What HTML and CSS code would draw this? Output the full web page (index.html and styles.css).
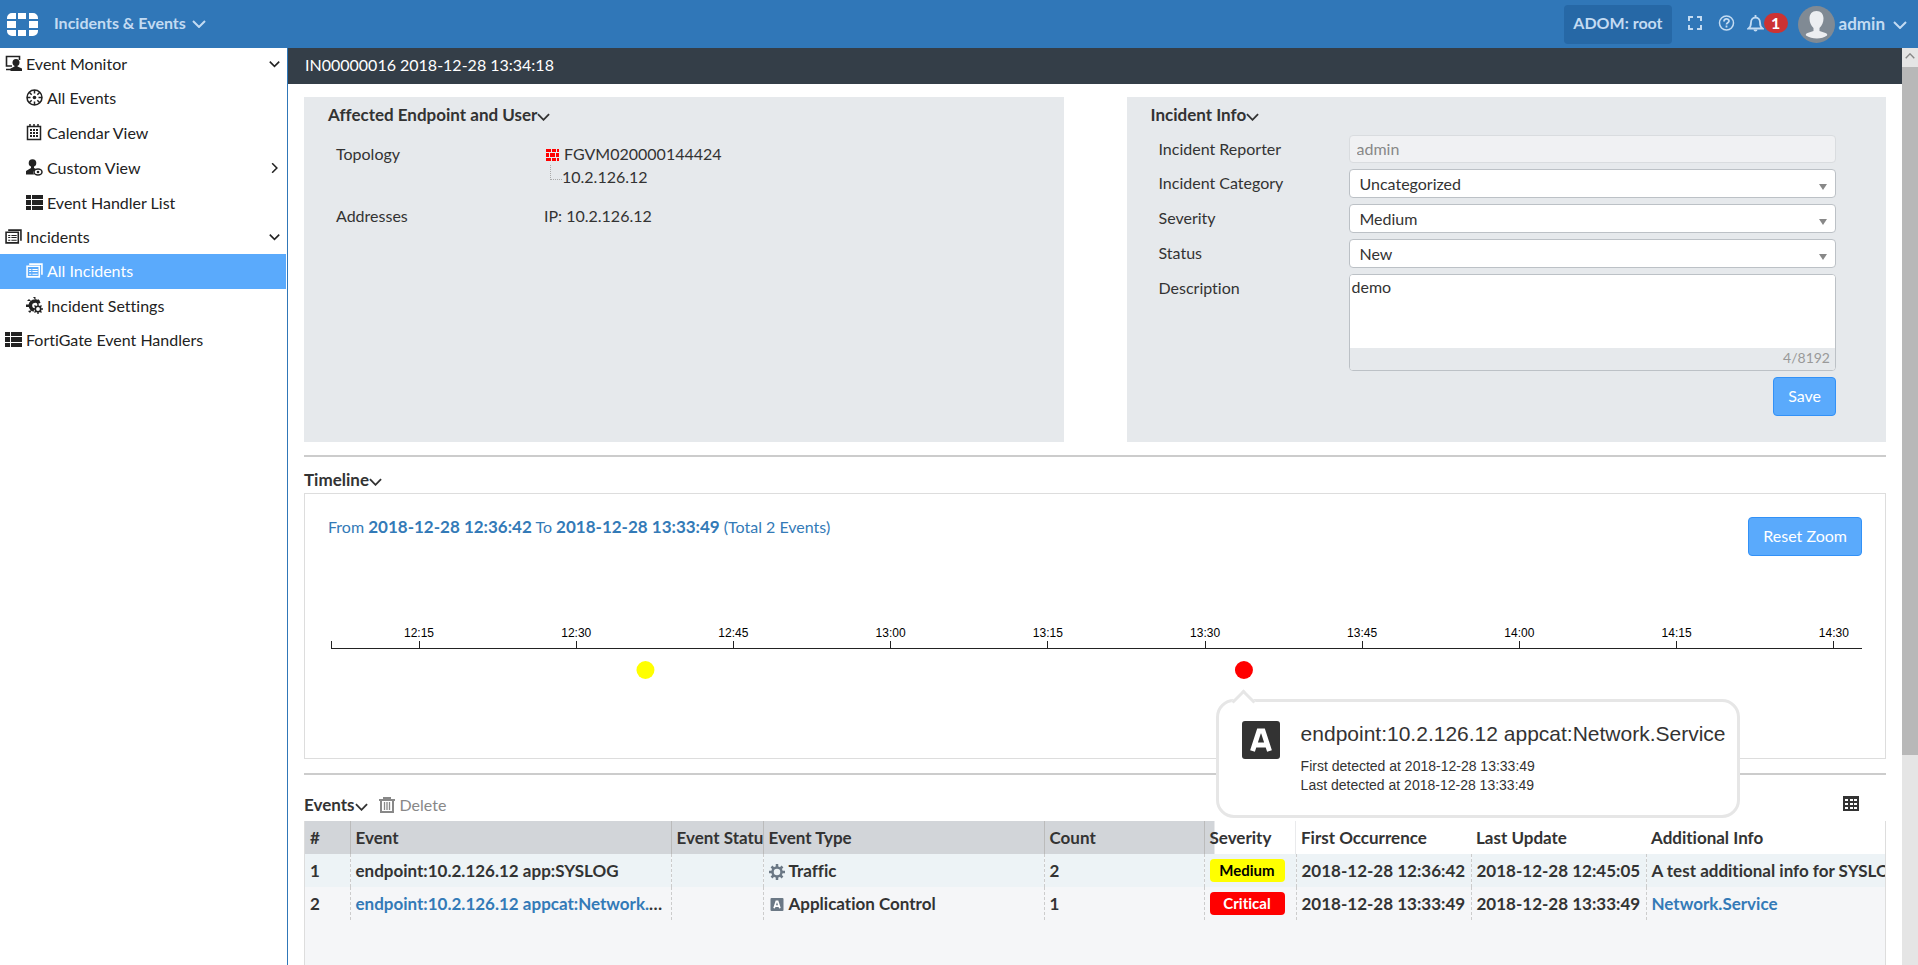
FILE: index.html
```html
<!DOCTYPE html>
<html lang="en">
<head>
    <meta charset="UTF-8">
    <title>Incidents &amp; Events</title>

    <link rel="stylesheet" href="styles.css">
</head>
<body>
<svg class="defs" width="0" height="0">
    <symbol id="chevron" viewBox="0 0 14 8"><path d="M1 1l6 6 6-6" fill="none" stroke="currentColor" stroke-width="2"/></symbol>
    <symbol id="list" viewBox="0 0 17 15"><path d="M0 0h5v4H0zM6 0h11v4H6zM0 5h5v5H0zM6 5h11v5H6zM0 11h5v4H0zM6 11h11v4H6z" fill="currentColor"/></symbol>
    <symbol id="cards" viewBox="0 0 16 14">
        <path d="M3 1h12v10M1 3h11.500v10H1z" fill="none" stroke="currentColor" stroke-width="1.500"/>
        <path d="M3 6h2M6 6h5M3 8h2M6 8h5M3 10.500h2M6 10.500h5" stroke="currentColor"/>
    </symbol>
    <symbol id="app" viewBox="0 0 38 38">
        <rect width="38" height="38" rx="3" fill="currentColor"/>
        <path d="M10.500 30L17 10h4l6.500 20M14 24h10" fill="none" stroke="#fff" stroke-width="5"/>
    </symbol>
</svg>

<header class="topbar">
    <svg class="logo" viewBox="0 0 31 23" fill="#fff">
        <path d="M5 0h4v6H0V5a5 5 0 0 1 5-5zM11 0h8v6h-8zM22 0h4a5 5 0 0 1 5 5v1h-9zM0 8h9v7H0zM22 8h9v7h-9zM0 17h9v6H5a5 5 0 0 1-5-5zM11 17h8v6h-8zM22 17h9v1a5 5 0 0 1-5 5h-4z"/>
    </svg>
    <button class="app-menu">Incidents &amp; Events <svg class="chevron"><use href="#chevron"/></svg></button>
    <button class="adom">ADOM: root</button>
    <button class="tool fullscreen" aria-label="Full screen">
        <svg width="14" height="14" viewBox="0 0 14 14" fill="none" stroke="currentColor" stroke-width="2"><path d="M1 5V1h4M9 1h4v4M13 9v4H9M5 13H1V9"/></svg>
    </button>
    <button class="tool help" aria-label="Help">
        <svg width="17" height="16" viewBox="0 0 17 16" fill="none" stroke="currentColor" stroke-width="1.500"><circle cx="8.500" cy="8" r="7"/><path d="M6 6.500c0-3.500 5-3.200 5-.5 0 1.800-2.500 1.800-2.500 3.500M8.500 10.500v2" stroke-width="1.800"/></svg>
    </button>
    <button class="tool alerts" aria-label="Alerts">
        <svg width="17" height="17" viewBox="0 0 17 17" fill="none" stroke="currentColor" stroke-width="1.800"><path d="M1.500 13.500c2-1.500 2.500-3 2.500-6 0-3 2-5 4.500-5S13 4.500 13 7.500c0 3 .5 4.500 2.500 6zM8.500 0v3"/><path d="M6.500 14.500a2 2 0 0 0 4 0z" fill="currentColor" stroke="none"/></svg>
        <span class="badge">1</span>
    </button>
    <button class="user">
        <svg width="37" height="37" viewBox="0 0 37 37">
            <circle cx="18.500" cy="18.500" r="18.500" fill="#808a94"/>
            <path d="M18.500 5c4.500 0 7 3 7 7.500 0 4-1.500 7-4 9.500v3l6 2c1.500.5 2 1.500 1.500 2.500-5 4-15 4-21 0-.5-1 0-2 1.500-2.500l6-2v-3c-2.500-2.500-4-5.500-4-9.500 0-4.500 2.500-7.500 7-7.500z" fill="#eceef1"/>
        </svg>
        admin <svg class="chevron"><use href="#chevron"/></svg>
    </button>
</header>

<div class="layout">
    <nav class="sidebar">
        <a class="item top" href="#">
            <svg viewBox="0 0 17 17"><path d="M7 11H1.500V1.500h13V5M1 14.500h5" fill="none" stroke="currentColor" stroke-width="1.600"/><circle cx="11" cy="7.500" r="3.500" fill="currentColor"/><path d="M9.500 10h3v1.500l4.500 2V16H5.500v-2.500l4-2z" fill="currentColor"/></svg>
            Event Monitor
            <svg class="caret"><use href="#chevron"/></svg>
        </a>
        <a class="item" href="#">
            <svg viewBox="0 0 17 17"><circle cx="8.500" cy="8.500" r="7.500" fill="none" stroke="currentColor" stroke-width="1.500"/><circle cx="8.500" cy="8.500" r="1.800" fill="currentColor"/><path d="M8.500 1v3.500M8.500 12.500v3.500M1 8.500h3.500M12.500 8.500h3.500M3.200 3.200l2.500 2.500M11.300 11.300l2.500 2.500M3.200 13.800l2.500-2.500M11.300 5.700l2.500-2.500" stroke="currentColor" stroke-width="1.500"/></svg>
            All Events
        </a>
        <a class="item" href="#">
            <svg viewBox="0 0 17 17"><path d="M1.500 2.500h13v13h-13z" fill="none" stroke="currentColor" stroke-width="1.500"/><path d="M4 0v3M12 0v3M8 0v3" stroke="currentColor" stroke-width="1.500"/><path d="M4 6h8M4 9h8M4 12h8" stroke="currentColor" stroke-width="2" stroke-dasharray="2 1"/></svg>
            Calendar View
        </a>
        <a class="item" href="#">
            <svg viewBox="0 0 17 17"><circle cx="6.500" cy="4" r="3.800" fill="currentColor"/><path d="M5 7h3v2l2 1-3 3 1 2.500H0V12l5-3z" fill="currentColor"/><ellipse cx="12" cy="13" rx="4" ry="3" fill="none" stroke="currentColor" stroke-width="1.500"/><circle cx="12" cy="13" r="1.300" fill="currentColor"/></svg>
            Custom View
            <svg class="caret right"><use href="#chevron"/></svg>
        </a>
        <a class="item" href="#">
            <svg><use href="#list"/></svg>
            Event Handler List
        </a>
        <a class="item top" href="#">
            <svg><use href="#cards"/></svg>
            Incidents
            <svg class="caret"><use href="#chevron"/></svg>
        </a>
        <a class="item active" href="#">
            <svg><use href="#cards"/></svg>
            All Incidents
        </a>
        <a class="item" href="#">
            <svg viewBox="0 0 17 17"><path d="M8 13A4.500 4.500 0 0 1 7 4.500c3-1 5 0 6 2" fill="none" stroke="currentColor" stroke-width="3.500"/><path d="M7 0h2.500v3M1 4l2-2 2 2M0 7.500h4v2.500H0zM2 14l2 2 2-3M12 2l2 2-2 2" fill="currentColor"/><circle cx="12" cy="12" r="2.700" fill="none" stroke="currentColor" stroke-width="1.600"/><path d="M12 7v2M12 15v2M7 12h2M15 12h2M8.500 8.500l1.500 1.500M14 14l1.500 1.500M8.500 15.500l1.500-1.500M14 10l1.500-1.500" stroke="currentColor" stroke-width="1.400"/></svg>
            Incident Settings
        </a>
        <a class="item top" href="#">
            <svg><use href="#list"/></svg>
            FortiGate Event Handlers
        </a>
    </nav>

    <main class="main">
        <h1 class="incident-title">IN00000016 2018-12-28 13:34:18</h1>
        <div class="content">
            <div class="panels">
                <section class="panel">
                    <h2>Affected Endpoint and User<svg class="toggle"><use href="#chevron"/></svg></h2>
                    <dl class="facts">
                        <dt>Topology</dt>
                        <dd>
                            <svg class="firewall" viewBox="0 0 13 12"><path d="M0 0h13v12H0z" fill="red"/><path d="M0 3.500h13M0 8.500h13M5.500 0v3M10.500 0v3M3.500 4v4M9.500 4v4M5.500 9v3M10.500 9v3" stroke="#e6e9ec"/></svg>
                            FGVM020000144424
                            <div class="child">10.2.126.12</div>
                        </dd>
                        <dt>Addresses</dt>
                        <dd>IP: 10.2.126.12</dd>
                    </dl>
                </section>
                <section class="panel">
                    <h2>Incident Info<svg class="toggle"><use href="#chevron"/></svg></h2>
                    <form class="form">
                        <label for="reporter">Incident Reporter</label>
                        <input id="reporter" type="text" value="admin" disabled>
                        <label for="category">Incident Category</label>
                        <div class="select"><select id="category"><option>Uncategorized</option></select></div>
                        <label for="severity">Severity</label>
                        <div class="select"><select id="severity"><option>Medium</option></select></div>
                        <label for="status">Status</label>
                        <div class="select"><select id="status"><option>New</option></select></div>
                        <label for="description">Description</label>
                        <div class="textbox">
                            <textarea id="description">demo</textarea>
                            <div class="counter">4/8192</div>
                        </div>
                        <button class="btn save" type="button">Save</button>
                    </form>
                </section>
            </div>

            <section class="block">
                <h2>Timeline<svg class="toggle"><use href="#chevron"/></svg></h2>
                <div class="timeline">
                    <div class="timeline-head">
                        <p>From <b>2018-12-28 12:36:42</b> To <b>2018-12-28 13:33:49</b> (Total 2 Events)</p>
                        <button class="btn">Reset Zoom</button>
                    </div>
                    <div class="chart">
                        <svg class="axis">
                            <path d="M0 12v7"/>
                            <line x1="0" y1="19" x2="100%" y2="19"/>
                            <line x1="5.750%" y1="12" x2="5.750%" y2="19"/><text x="5.750%" y="8">12:15</text>
                            <line x1="16.020%" y1="12" x2="16.020%" y2="19"/><text x="16.020%" y="8">12:30</text>
                            <line x1="26.280%" y1="12" x2="26.280%" y2="19"/><text x="26.280%" y="8">12:45</text>
                            <line x1="36.550%" y1="12" x2="36.550%" y2="19"/><text x="36.550%" y="8">13:00</text>
                            <line x1="46.820%" y1="12" x2="46.820%" y2="19"/><text x="46.820%" y="8">13:15</text>
                            <line x1="57.090%" y1="12" x2="57.090%" y2="19"/><text x="57.090%" y="8">13:30</text>
                            <line x1="67.350%" y1="12" x2="67.350%" y2="19"/><text x="67.350%" y="8">13:45</text>
                            <line x1="77.620%" y1="12" x2="77.620%" y2="19"/><text x="77.620%" y="8">14:00</text>
                            <line x1="87.890%" y1="12" x2="87.890%" y2="19"/><text x="87.890%" y="8">14:15</text>
                            <line x1="98.160%" y1="12" x2="98.160%" y2="19"/><text x="98.160%" y="8">14:30</text>
                            <circle cx="20.540%" cy="41" r="9" fill="#ff0"/>
                            <circle cx="59.630%" cy="41" r="9" fill="red"/>
                        </svg>
                        <div class="tooltip">
                            <svg class="tooltip-icon"><use href="#app"/></svg>
                            <div>
                                <h3>endpoint:10.2.126.12 appcat:Network.Service</h3>
                                <p>First detected at 2018-12-28 13:33:49</p>
                                <p>Last detected at 2018-12-28 13:33:49</p>
                            </div>
                        </div>
                    </div>
                </div>
            </section>

            <section class="block events">
                <div class="events-head">
                    <h2>Events<svg class="toggle"><use href="#chevron"/></svg></h2>
                    <button class="delete">
                        <svg width="16" height="16" viewBox="0 0 16 16" fill="none" stroke="currentColor" stroke-width="2"><path d="M0 3h16M5 3V1h6v2M2 4v11h12V4"/><path d="M5.500 5v8M8 5v8M10.500 5v8" stroke-width="1.300"/></svg>
                        Delete
                    </button>
                    <button class="columns" aria-label="Columns">
                        <svg width="16" height="15" viewBox="0 0 16 15"><path d="M0 0h16v15H0z" fill="currentColor"/><path d="M2 3h3v2H2zM7 3h3v2H7zM11 3h3v2h-3zM2 7h3v2H2zM7 7h3v2H7zM11 7h3v2h-3zM2 11h3v2H2zM7 11h3v2H7zM11 11h3v2h-3z" fill="#fff"/></svg>
                    </button>
                </div>
                <div class="table-wrap">
                    <table>
                        <colgroup>
                            <col class="c-num"><col class="c-event"><col class="c-status"><col class="c-type"><col class="c-count"><col class="c-severity"><col class="c-date"><col class="c-date"><col>
                        </colgroup>
                        <thead>
                        <tr>
                            <th>#</th>
                            <th>Event</th>
                            <th>Event Status</th>
                            <th>Event Type</th>
                            <th>Count</th>
                            <th class="fade">Severity</th>
                            <th class="plain">First Occurrence</th>
                            <th class="plain">Last Update</th>
                            <th class="plain">Additional Info</th>
                        </tr>
                        </thead>
                        <tbody>
                        <tr>
                            <td>1</td>
                            <td>endpoint:10.2.126.12 app:SYSLOG</td>
                            <td></td>
                            <td><svg class="type" viewBox="0 0 16 16" fill="none" stroke="currentColor"><circle cx="8" cy="8" r="4.500" stroke-width="2.500"/><path d="M8 0v3M8 13v3M0 8h3M13 8h3M2.500 2.500l2 2M11.500 11.500l2 2M2.500 13.500l2-2M11.500 4.500l2-2" stroke-width="2.500"/></svg>Traffic</td>
                            <td>2</td>
                            <td><span class="tag medium">Medium</span></td>
                            <td>2018-12-28 12:36:42</td>
                            <td>2018-12-28 12:45:05</td>
                            <td>A test additional info for SYSLOG</td>
                        </tr>
                        <tr>
                            <td>2</td>
                            <td class="long"><a href="#">endpoint:10.2.126.12 appcat:Network.Service</a></td>
                            <td></td>
                            <td><svg class="type square"><use href="#app"/></svg>Application Control</td>
                            <td>1</td>
                            <td><span class="tag critical">Critical</span></td>
                            <td>2018-12-28 13:33:49</td>
                            <td>2018-12-28 13:33:49</td>
                            <td><a href="#">Network.Service</a></td>
                        </tr>
                        </tbody>
                    </table>
                </div>
            </section>
        </div>
    </main>

    <div class="scrollbar">
        <div class="scroll-up"><svg width="10" height="6"><use href="#chevron"/></svg></div>
        <div class="scroll-thumb"></div>
    </div>
</div>
</body>
</html>
```
FILE: styles.css
```css
* {
    box-sizing: border-box;
}

html, body {
    height: 100%;
    margin: 0;
}

body {
    display: flex;
    flex-direction: column;
    overflow: hidden;
    background: #fff;
    color: #333;
    font: 16px/20px Lato, "Liberation Sans", sans-serif;
    font-variant-ligatures: none;
}

h1, h2, h3, p, dl, dd {
    margin: 0;
}

a {
    color: #337ab7;
    text-decoration: none;
}

button, input, select, textarea {
    font: inherit;
    color: inherit;
}

button {
    padding: 0;
    border: 0;
    background: none;
}

svg {
    flex: none;
}

.defs {
    position: absolute;
}

/* top bar */

.topbar {
    display: flex;
    flex: none;
    align-items: center;
    height: 48px;
    padding: 0 11px 0 7px;
    background: #3077b8;
    color: #c3dbf2;
    font-weight: bold;
}

.topbar button {
    display: flex;
    align-items: center;
}

.logo {
    width: 31px;
    height: 23px;
}

.chevron {
    width: 14px;
    height: 8px;
    margin: 2px 0 0 6px;
}

.topbar .app-menu {
    margin: 0 auto 0 16px;
    padding-bottom: 2px;
}

.topbar .adom {
    height: 39px;
    margin-right: 16px;
    padding: 0 9px 2px;
    border-radius: 4px;
    background: #2668a6;
}

.topbar .tool {
    padding-bottom: 2px;
}

.fullscreen {
    margin-right: 16px;
}

.help {
    margin-right: 12px;
}

.badge {
    width: 24px;
    border-radius: 10px;
    background: #c33;
    color: #fff;
    text-align: center;
}

.user {
    gap: 4px;
    margin-left: 10px;
    font-size: 17px;
}

.user .chevron {
    margin-left: 4px;
}

.layout {
    display: flex;
    flex: 1;
    min-height: 0;
}

/* sidebar */

.sidebar {
    flex: none;
    width: 288px;
    padding-right: 1px;
    border-right: 1px solid #3077b8;
}

.item {
    display: flex;
    align-items: center;
    gap: 4px;
    height: 35px;
    padding: 0 6px 2px 26px;
    color: #222;
}

.item.top {
    height: 33px;
    padding-left: 5px;
}

.item svg {
    width: 17px;
    height: 17px;
}

.item .caret {
    width: 11px;
    height: 8px;
    margin-left: auto;
}

.item .right {
    transform: rotate(-90deg);
}

.item.active {
    background: #5aaafc;
    color: #fff;
}

/* incident */

.main {
    display: flex;
    flex: 1;
    flex-direction: column;
    min-width: 0;
}

.incident-title {
    flex: none;
    padding: 7px 17px 9px;
    background: #343e48;
    color: #fff;
    font-size: 16px;
    font-weight: normal;
}

.content {
    display: flex;
    flex: 1;
    flex-direction: column;
    min-height: 0;
    padding: 13px 16px 0;
}

h2 {
    font-size: 17px;
    line-height: 20px;
}

.toggle {
    width: 13px;
    height: 8px;
}

.panels {
    display: grid;
    grid-template-columns: 1fr 1fr;
    gap: 63px;
}

.panel {
    padding: 8px 50px 26px 24px;
    background: #e6e9ec;
}

.facts {
    display: grid;
    grid-template-columns: 208px 1fr;
    row-gap: 16px;
    margin-top: 17px;
    padding-left: 8px;
    line-height: 23px;
}

.firewall {
    width: 13px;
    height: 12px;
    margin: 0 1px 0 2px;
    vertical-align: -1px;
}

.child {
    display: flex;
    padding-left: 6px;
}

.child::before {
    content: "";
    width: 11px;
    height: 14px;
    border: dotted #aaa;
    border-width: 0 0 1px 1px;
}

.form {
    display: grid;
    grid-template-columns: 190px 1fr;
    row-gap: 6px;
    margin-top: 10px;
    padding-left: 8px;
}

.form label {
    line-height: 27px;
}

.form input, .form select, .textbox {
    width: 100%;
    border: 1px solid #bcc1c6;
    border-radius: 4px;
    background: #fff;
}

.form input {
    height: 28px;
    padding: 0 7px 2px;
    border-color: #d9dcdf;
    background: #f0f1f3;
    color: #888;
}

.select {
    position: relative;
}

.form select {
    display: block;
    height: 29px;
    padding: 1px 10px 0;
    appearance: none;
}

.select::after {
    content: "";
    position: absolute;
    top: 15px;
    right: 9px;
    border: solid transparent;
    border-width: 6px 4px 0;
    border-top-color: #888;
}

.textbox {
    overflow: hidden;
}

.textbox textarea {
    display: block;
    width: 100%;
    height: 73px;
    padding: 2px;
    border: 0;
    outline: 0;
    resize: none;
}

.counter {
    padding: 0 5px 2px;
    background: #e6e9ec;
    color: #999;
    font-size: 14px;
    text-align: right;
}

.btn {
    height: 39px;
    padding: 0 14px 2px;
    border: 1px solid #3291f7;
    border-radius: 4px;
    background: #5aaafc;
    color: #fff;
}

.save {
    grid-column: 2;
    justify-self: end;
}

/* timeline */

.block {
    margin-top: 13px;
    padding-top: 13px;
    border-top: 2px solid #ccc;
}

.timeline {
    height: 266px;
    margin-top: 3px;
    padding: 23px 23px 0;
    border: 1px solid #ddd;
}

.timeline-head {
    display: flex;
    justify-content: space-between;
    color: #337ab7;
}

.timeline-head b {
    font-size: 17px;
}

.chart {
    position: relative;
    margin: 73px 0 0 3px;
}

.axis {
    display: block;
    width: 100%;
    height: 60px;
    overflow: visible;
    font: 12px "Liberation Sans", sans-serif;
    text-anchor: middle;
}

.axis line, .axis path {
    stroke: #222;
    stroke-width: 1;
    shape-rendering: crispEdges;
}

.tooltip {
    position: absolute;
    z-index: 1;
    top: 70px;
    left: 60%;
    display: flex;
    gap: 21px;
    height: 119px;
    margin-left: -34px;
    padding: 19px 11px 0 23px;
    border: 3px solid #e6e6e6;
    border-radius: 18px;
    background: #fff;
    font-family: "Liberation Sans", sans-serif;
    white-space: nowrap;
}

.tooltip::before {
    content: "";
    position: absolute;
    top: -9px;
    left: 16px;
    width: 14px;
    height: 14px;
    border: solid #e6e6e6;
    border-width: 3px 0 0 3px;
    background: #fff;
    transform: rotate(45deg);
}

.tooltip h3 {
    margin-bottom: 10px;
    font-size: 21px;
    line-height: 26px;
    font-weight: normal;
}

.tooltip p {
    font-size: 14px;
    line-height: 19px;
}

.tooltip-icon {
    width: 38px;
    height: 38px;
}

/* events */

.events {
    display: flex;
    flex: 1;
    flex-direction: column;
    min-height: 0;
    margin-top: 14px;
}

.events-head {
    display: flex;
    align-items: center;
    height: 33px;
    padding-right: 27px;
}

.delete {
    display: flex;
    align-items: center;
    gap: 5px;
    margin: 0 auto 0 11px;
    color: #888;
}

.table-wrap {
    flex: 1;
    overflow: hidden;
    border: solid #ddd;
    border-width: 0 1px;
    background: #f5f6f8;
}

table {
    width: 100%;
    border-collapse: collapse;
    table-layout: fixed;
    font-size: 17px;
    font-weight: bold;
}

th, td {
    height: 33px;
    padding: 0 5px;
    overflow: hidden;
    text-align: left;
    white-space: nowrap;
}

th {
    padding-right: 0;
    border-right: 1px solid #bbb;
    background: #d2d5d9;
}

th.fade {
    border: 0;
    background: linear-gradient(90deg, #d2d5d9 10px, #fff 10px);
}

th.plain {
    border: 0;
    background: #fff;
}

td {
    border-right: 1px dashed #ccc;
}

th:last-child, td:last-child {
    padding-right: 0;
    border-right: 0;
}

tbody tr:first-child {
    background: #edf3f6;
}

td.long {
    padding-right: 0;
    text-overflow: ellipsis;
}

.c-num {
    width: 45px;
}

.c-event {
    width: 321px;
}

.c-status {
    width: 92px;
}

.c-type {
    width: 281px;
}

.c-count {
    width: 160px;
}

.c-severity {
    width: 92px;
}

.c-date {
    width: 175px;
}

.type {
    width: 16px;
    height: 16px;
    margin-right: 4px;
    color: #6b7885;
    vertical-align: -3px;
}

.square {
    height: 13px;
    vertical-align: -1px;
}

.tag {
    display: block;
    width: 75px;
    border-radius: 4px;
    font-size: 15px;
    line-height: 23px;
    text-align: center;
}

.medium {
    background: #ff0;
    color: #000;
}

.critical {
    background: red;
    color: #fff;
}

/* page scrollbar */

.scrollbar {
    display: flex;
    flex: none;
    flex-direction: column;
    width: 16px;
    background: #e5e5e5;
}

.scroll-up {
    height: 19px;
    line-height: 16px;
    text-align: center;
    color: #888;
    transform: rotate(180deg);
}

.scroll-thumb {
    height: 75%;
    background: #b8b8b8;
}
```
